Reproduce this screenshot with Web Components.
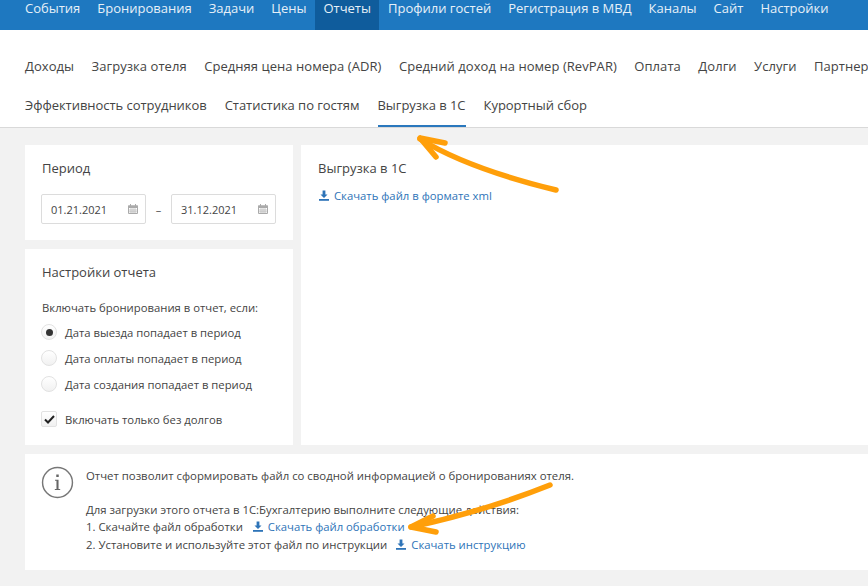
<!DOCTYPE html>
<html lang="ru">
<head>
<meta charset="utf-8">
<title>Выгрузка в 1С</title>
<style>
  html, body { margin: 0; height: 586px; overflow: hidden; background: #f2f2f2; }
  body { font-family: "Open Sans", "Noto Sans", sans-serif; font-size: 12px; color: #444; position: relative; }
</style>
</head>
<body>
<report-page></report-page>

<script>
const DOWNLOAD_ICON = `<svg width="10" height="11" viewBox="0 0 10 11"><path fill="currentColor" d="M3.6 0.5h2.8v3.9h2.1L5 7.9 1.5 4.4h2.1z"/><path fill="currentColor" d="M0 9h10v1.8H0z"/></svg>`;

class TopBar extends HTMLElement {
  constructor() {
    super();
    this.attachShadow({ mode: "open" });
  }
  connectedCallback() {
    const items = ["События", "Бронирования", "Задачи", "Цены", "Отчеты", "Профили гостей", "Регистрация в МВД", "Каналы", "Сайт", "Настройки"];
    this.shadowRoot.innerHTML = `
      <style>
        :host { display: block; background: #1e78c0; height: 30px; }
        nav { display: flex; padding-left: 16.5px; height: 30px; white-space: nowrap; }
        a { display: block; padding: 0 8.5px; line-height: 17px; font-size: 13px; color: #e6f0f8; }
        a.active { background: #0f5c9c; }
      </style>
      <nav>${items.map(i => `<a class="${i === "Отчеты" ? "active" : ""}">${i}</a>`).join("")}</nav>
    `;
  }
}

class ReportTabs extends HTMLElement {
  constructor() {
    super();
    this.attachShadow({ mode: "open" });
  }
  connectedCallback() {
    const row1 = ["Доходы", "Загрузка отеля", "Средняя цена номера (ADR)", "Средний доход на номер (RevPAR)", "Оплата", "Долги", "Услуги", "Партнеры"];
    const row2 = ["Эффективность сотрудников", "Статистика по гостям", "Выгрузка в 1С", "Курортный сбор"];
    const link = t => `<a class="${t === "Выгрузка в 1С" ? "active" : ""}">${t}</a>`;
    this.shadowRoot.innerHTML = `
      <style>
        :host { display: block; background: #fff; height: 97px; border-bottom: 1px solid #d9d9d9; box-sizing: content-box; overflow: hidden; }
        .row { display: flex; gap: 18px; padding-left: 25px; white-space: nowrap; }
        .row.first { gap: 17.5px; padding-top: 26px; height: 20px; letter-spacing: .05px; }
        .row.second { padding-top: 19px; letter-spacing: -.04px; }
        a { display: block; font-size: 13px; line-height: 20px; color: #444; height: 32px; box-sizing: border-box; }
        a.active { border-bottom: 2px solid #2a78bd; }
      </style>
      <div class="row first">${row1.map(link).join("")}</div>
      <div class="row second">${row2.map(link).join("")}</div>
    `;
  }
}

class PanelCard extends HTMLElement {
  constructor() {
    super();
    this.attachShadow({ mode: "open" });
    this.shadowRoot.innerHTML = `
      <style>
        :host { display: block; background: #fff; box-sizing: border-box; padding: 13px 17px; }
        h3 { margin: 0; font-size: 13px; line-height: 20px; font-weight: 400; color: #444; }
      </style>
      <h3></h3>
      <slot></slot>
    `;
  }
  connectedCallback() {
    this.shadowRoot.querySelector("h3").textContent = this.getAttribute("heading");
  }
}

class DateInput extends HTMLElement {
  constructor() {
    super();
    this.attachShadow({ mode: "open" });
    this.shadowRoot.innerHTML = `
      <style>
        :host { display: flex; align-items: center; justify-content: space-between; width: 105px; height: 30px; box-sizing: border-box;
                border: 1px solid #dcdcdc; border-radius: 2px; padding: 0 7px 0 9px; font-size: 11px; color: #444; background: #fff; }
        svg { display: block; color: #aaa; }
      </style>
      <slot></slot>
      <svg width="10" height="10" viewBox="0 0 10 10">
        <path fill="none" stroke="currentColor" d="M.5 2h9v7.5h-9z"/>
        <path fill="currentColor" d="M0 1.5h10V4H0zM2 0h1v2H2zM7 0h1v2H7z"/>
        <path stroke="currentColor" stroke-width=".6" d="M1 6h8M1 7.8h8M3 4v5M5 4v5M7 4v5"/>
      </svg>
    `;
  }
}

class RadioOption extends HTMLElement {
  constructor() {
    super();
    this.attachShadow({ mode: "open" });
    this.shadowRoot.innerHTML = `
      <style>
        :host { display: flex; align-items: center; gap: 8px; height: 26px; font-size: 11.3px; color: #444; margin-left: -1px; }
        i { display: block; width: 16px; height: 16px; border-radius: 50%; box-sizing: border-box; border: 1px solid #e2e2e2;
            background: linear-gradient(#fff, #f1f1f1); position: relative; }
        :host([checked]) i::after { content: ""; position: absolute; left: 3.5px; top: 3.5px; width: 7px; height: 7px; border-radius: 50%; background: #333; }
      </style>
      <i></i><slot></slot>
    `;
  }
}

class CheckOption extends HTMLElement {
  constructor() {
    super();
    this.attachShadow({ mode: "open" });
    this.shadowRoot.innerHTML = `
      <style>
        :host { display: flex; align-items: center; gap: 8px; height: 20px; font-size: 11.3px; color: #444; margin-left: -1px; }
        span.box { display: flex; align-items: center; justify-content: center; width: 16px; height: 16px; box-sizing: border-box;
                   border: 1px solid #e2e2e2; border-radius: 2px; background: linear-gradient(#fff, #f1f1f1); }
      </style>
      <span class="box">
        <svg width="11" height="9" viewBox="0 0 11 9"><path fill="none" stroke="#222" stroke-width="2" d="M1 4.5l3 3 6-6.5"/></svg>
      </span>
      <slot></slot>
    `;
  }
}

class DownloadLink extends HTMLElement {
  constructor() {
    super();
    this.attachShadow({ mode: "open" });
    this.shadowRoot.innerHTML = `
      <style>
        :host { display: inline-flex; align-items: center; gap: 5px; color: #2e74b8; font-size: 11.3px; line-height: 17px; }
        svg { display: block; }
      </style>
      ${DOWNLOAD_ICON}<slot></slot>
    `;
  }
}

class InfoPanel extends HTMLElement {
  constructor() {
    super();
    this.attachShadow({ mode: "open" });
    this.shadowRoot.innerHTML = `
      <style>
        :host { display: flex; gap: 12px; background: #fff; box-sizing: border-box; padding: 13px 17px 13px 16px; font-size: 11.36px; line-height: 17px; color: #444; }
        .icon { flex: none; width: 33px; height: 33px; margin-top: -1px; }
        .body { padding-top: 0; }
      </style>
      <svg class="icon" viewBox="0 0 32 32">
        <circle cx="16" cy="16" r="14.5" fill="none" stroke="#777" stroke-width="1.4"/>
        <path fill="#666" d="M14.8 8.2h2.4v2.4h-2.4zM13.6 13.4h3.4v8.8h1.6v1h-5.2v-1h1.6v-7.8h-1.4z"/>
      </svg>
      <div class="body"><slot></slot></div>
    `;
  }
}

class OrangeArrow extends HTMLElement {
  constructor() {
    super();
    this.attachShadow({ mode: "open" });
    this.shadowRoot.innerHTML = `
      <style>
        :host { position: absolute; left: 0; top: 0; width: 868px; height: 586px; pointer-events: none; }
        svg { display: block; }
        path { fill: none; stroke: #ff9f0a; stroke-width: 5.5; stroke-linecap: round; stroke-linejoin: round; }
      </style>
      <svg width="868" height="586" viewBox="0 0 868 586">
        <path d="M556 190C515 180 462 165 420 139"/>
        <path d="M420 138L445 143M420 138L436 157"/>
        <path d="M550 485C505 503 458 517 411 527"/>
        <path d="M411 527L433 516M411 527L436 532"/>
      </svg>
    `;
  }
}

class ReportPage extends HTMLElement {
  constructor() {
    super();
    this.attachShadow({ mode: "open" });
  }
  connectedCallback() {
    this.shadowRoot.innerHTML = `
      <style>
        :host { display: block; height: 586px; }
        main { display: flex; flex-direction: column; gap: 9px; padding: 17px 0 0 25px; }
        .top { display: flex; gap: 8px; height: 300px; }
        .left { display: flex; flex-direction: column; gap: 9px; width: 268px; flex: none; }
        .period { height: 95px; }
        .settings { height: 196px; padding-top: 13px; }
        .result { flex: 1; }
        .dates { display: flex; align-items: center; justify-content: space-between; margin-top: 16px; margin-left: -1px; width: 235px; color: #555; font-size: 11px; }
        .lead { font-size: 11.3px; line-height: 17px; margin-top: 17px; margin-bottom: 3px; color: #444; }
        radio-option:first-of-type { margin-top: 3px; }
        check-option { margin-top: 12px; }
        .dl { margin-top: 9px; margin-left: 1px; }
        .info { height: 116px; }
        p { margin: 0; }
        .gap { margin-top: 17px; }
        .line { display: flex; gap: 9px; align-items: center; height: 17.5px; }
        .line.first { gap: 10px; }
      </style>
      <top-bar></top-bar>
      <report-tabs></report-tabs>
      <main>
        <div class="top">
          <div class="left">
            <panel-card class="period" heading="Период">
              <div class="dates">
                <date-input>01.21.2021</date-input><span>–</span><date-input>31.12.2021</date-input>
              </div>
            </panel-card>
            <panel-card class="settings" heading="Настройки отчета">
              <div class="lead">Включать бронирования в отчет, если:</div>
              <radio-option checked>Дата выезда попадает в период</radio-option>
              <radio-option>Дата оплаты попадает в период</radio-option>
              <radio-option>Дата создания попадает в период</radio-option>
              <check-option>Включать только без долгов</check-option>
            </panel-card>
          </div>
          <panel-card class="result" heading="Выгрузка в 1С">
            <div class="dl"><download-link>Скачать файл в формате xml</download-link></div>
          </panel-card>
        </div>
        <info-panel class="info">
          <p>Отчет позволит сформировать файл со сводной информацией о бронированиях отеля.</p>
          <p class="gap">Для загрузки этого отчета в 1С:Бухгалтерию выполните следующие действия:</p>
          <div class="line first">1. Скачайте файл обработки <download-link>Скачать файл обработки</download-link></div>
          <div class="line">2. Установите и используйте этот файл по инструкции <download-link>Скачать инструкцию</download-link></div>
        </info-panel>
      </main>
      <orange-arrow></orange-arrow>
    `;
  }
}

customElements.define("top-bar", TopBar);
customElements.define("report-tabs", ReportTabs);
customElements.define("panel-card", PanelCard);
customElements.define("date-input", DateInput);
customElements.define("radio-option", RadioOption);
customElements.define("check-option", CheckOption);
customElements.define("download-link", DownloadLink);
customElements.define("info-panel", InfoPanel);
customElements.define("orange-arrow", OrangeArrow);
customElements.define("report-page", ReportPage);
</script>
</body>
</html>
